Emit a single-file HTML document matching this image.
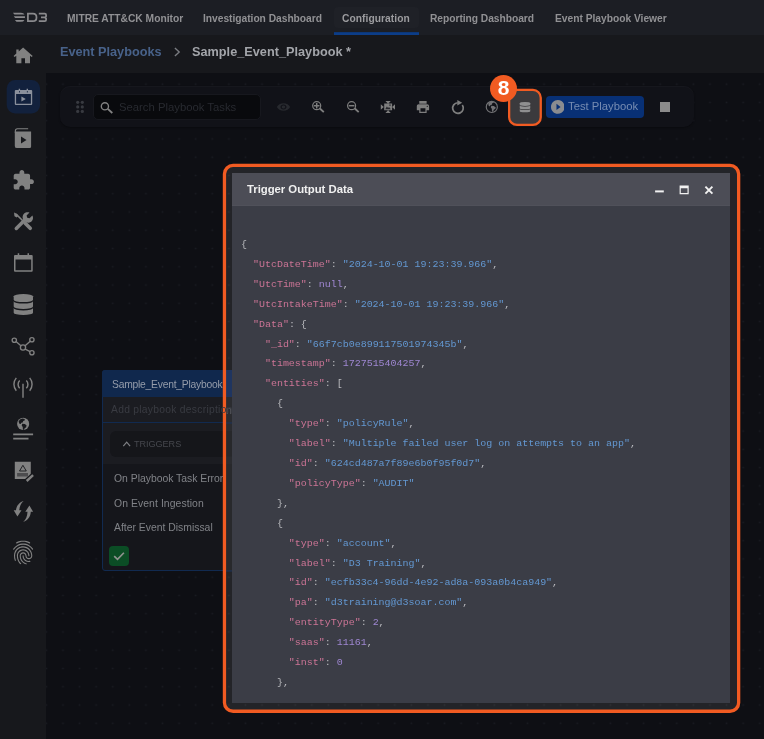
<!DOCTYPE html>
<html lang="en">
<head>
<meta charset="utf-8">
<title>Event Playbooks - Sample_Event_Playbook</title>
<style>
*{box-sizing:border-box;margin:0;padding:0}
html,body{width:764px;height:739px;overflow:hidden;background:#0e0f14;font-family:"Liberation Sans",sans-serif}
#app{position:relative;width:764px;height:739px;overflow:hidden;background:#0e0f14}
.abs{position:absolute;display:block}
.tx{position:absolute;white-space:nowrap;will-change:transform;font-family:"Liberation Sans",sans-serif}
#topbar{left:0;top:0;width:764px;height:35px;background:#1c1e24}
#tabact{left:334px;top:7px;width:84.5px;height:20.5px;border-radius:4px;background:#1f2127}
#tabline{left:334px;top:32px;width:84.5px;height:3px;background:linear-gradient(#0c3778 0,#0c3778 1px,#0c3d88 1px)}
#sidebar{left:0;top:35px;width:46px;height:705px;background:#17181c}
#crumbbar{left:46px;top:35px;width:718px;height:37.8px;background:#17181c}
#canvas{left:46px;top:72.8px;width:718px;height:667px;background-color:#0e0f14}
#toolbar{left:59.5px;top:86.3px;width:634px;height:41px;border-radius:10px;background:#111218;box-shadow:inset 0 1px 0 #16171d,0 1px 2px rgba(0,0,0,.3)}
#search{left:93.3px;top:94px;width:168px;height:25.5px;border-radius:5px;background:#090a0d;border:1px solid #17181e}
#badge{left:490px;top:75px;width:27px;height:27px;border-radius:13.5px;background:#f15b22;color:#fff;font-weight:bold;font-size:21px;line-height:26px;text-align:center;will-change:transform}
#testbtn{left:546px;top:96px;width:97.5px;height:21.5px;border-radius:4px;background:#083075}
#stop{left:660px;top:102px;width:10.3px;height:10.1px;background:#8b8b8b}
#node{left:102px;top:370px;width:170px;height:201px;background:#15161b;border:1px solid #112a50;border-radius:3px}
#nodehead{left:102px;top:370px;width:170px;height:27px;background:#10284d;border-radius:3px 3px 0 0}
#nodedesc{left:103px;top:397px;width:169px;height:26px;background:#1b1c21;border-bottom:1px solid #112a50}
#trigwrap{left:103px;top:423px;width:169px;height:41px;background:#1b1c21}
#trig{left:110px;top:431px;width:162px;height:25.5px;border-radius:6px 0 0 6px;background:#15161a}
#chk{left:109px;top:546.2px;width:20.2px;height:19.7px;border-radius:4px;background:#0b4d25}
#hlfill{left:224px;top:165px;width:516px;height:547px;border-radius:10px;background:#232428;overflow:hidden}
#dlg{left:232px;top:173px;width:498px;height:530px;background:#3b3d46}
#dlghead{left:232px;top:173px;width:498px;height:33px;background:#4c4d56;border-bottom:1px solid #50515a}
#code{left:241.3px;top:234.9px;font-family:"Liberation Mono",monospace;font-size:9.98px;line-height:19.9px;color:#babbbf;white-space:pre;will-change:transform}
.k{color:#cb7495}.s{color:#6398d2}.n{color:#9f87d2}
</style>
</head>
<body>
<div id="app">
 <div id="canvas" class="abs"></div>
 <svg class="abs" style="left:0;top:0" width="764" height="739" viewBox="0 0 764 739">
  <defs><pattern id="dots" x="54.67" y="129.82" width="16.59" height="18.26" patternUnits="userSpaceOnUse"><rect x="7.5" y="8.3" width="1.6" height="1.6" rx=".5" fill="#1a1c23"/></pattern>
  <clipPath id="cv"><rect x="46.5" y="72.7" width="718" height="667"/></clipPath></defs>
  <rect x="46" y="72.8" width="718" height="667" fill="url(#dots)"/>
 </svg>
 <div id="topbar" class="abs"><div id="tabact" class="abs"></div><div id="tabline" class="abs"></div></div>
 <div id="sidebar" class="abs"></div>
 <div id="crumbbar" class="abs"></div>
 <svg class="abs" style="left:170px;top:44px" width="14" height="16" viewBox="170 44 14 16"><path d="M174.9 47.9l4.3 4-4.3 4" fill="none" stroke="#7b7d82" stroke-width="1.35"/></svg>
 <!-- D3 logo -->
 <svg class="abs" style="left:0;top:0" width="60" height="34" viewBox="0 0 60 34">
  <g fill="#8a8a8d"><path d="M12.9 12.8H21Q23.8 12.9 24.5 14.5H14.4Z"/><path d="M13.8 16.2H24.9Q25.1 17.2 24.9 18.1H15.2Z"/><path d="M14.9 19.9H24.4Q23.6 21.7 21 21.8H16.5Z"/></g>
  <g fill="none" stroke="#8a8a8d" stroke-width="1.75"><path d="M27.9 13.7H33Q36.5 13.7 36.5 17.4Q36.5 21.1 33 21.1H27.9Z"/><path d="M38.8 13.7H44.8Q46.1 13.7 46.1 15V16.2L45.1 17.4 46.1 18.6V19.8Q46.1 21.1 44.8 21.1H38.8M41 17.4H45.1"/></g>
 </svg>
 <svg class="abs" style="left:0;top:0" width="46" height="739" viewBox="0 0 46 739"><path fill="#818181" d="M23.1 47.6L32.7 55.9l-1 1.2-1.7-1.4V63.3H25V58.3h-3.6V63.3h-5.1V55.7l-1.7 1.4-1-1.2 2.7-2.4V49.5h2.4v1.9z"/><rect x="6.7" y="80.1" width="33.4" height="33.3" rx="8.5" fill="#12213d"/><path fill="#8a909c" fill-rule="evenodd" d="M14.8 91a1 1 0 0 1 1-1h15.4a1 1 0 0 1 1 1v13a1 1 0 0 1-1 1H15.8a1 1 0 0 1-1-1zM16.1 94.1v9.6h14.8v-9.6z"/><path fill="#8a909c" d="M18.7 88.7h1.4v2.5h-1.4zM26.6 88.7h1.4v2.5h-1.4zM21.4 96.6l4.4 2.4-4.4 2.5z"/><path fill="#12213d" d="M19 90.9h.8v1.5H19zM26.9 90.9h.8v1.5h-.8z"/><path fill="#818181" d="M14.8 131.6h16.3v15a1.5 1.5 0 0 1-1.5 1.5H17a2.2 2.2 0 0 1-2.2-2.2z"/><path fill="none" stroke="#818181" stroke-width="1.1" d="M15.35 133v-2.1a2.1 2.1 0 0 1 2.1-2.1h10.7"/><path fill="#17181c" d="M21 136.6l5.5 3.4-5.5 3.4z"/><svg x="11.78" y="169.18" width="23.09" height="22.17" viewBox="0 0 24 24" preserveAspectRatio="none"><path fill="#818181" d="M20.5 11H19V7c0-1.1-.9-2-2-2h-4V3.5C13 2.12 11.88 1 10.5 1S8 2.12 8 3.5V5H4c-1.1 0-1.99.9-1.99 2v3.8H3.5c1.49 0 2.7 1.21 2.7 2.7s-1.21 2.7-2.7 2.7H2V20c0 1.1.9 2 2 2h3.8v-1.5c0-1.49 1.21-2.7 2.7-2.7 1.49 0 2.7 1.21 2.7 2.7V22H17c1.1 0 2-.9 2-2v-4h1.5c1.38 0 2.5-1.12 2.5-2.5S21.88 11 20.5 11z"/></svg><g fill="none" stroke="#818181" stroke-linecap="round"><path d="M16.6 214.6l5.7 5.7" stroke-width="1.5"/><path d="M25.2 223.2l5 5" stroke-width="3.7"/><path d="M16.3 228.5l8.2-8.2" stroke-width="3.5"/></g><path fill="#818181" d="M14 212.6l2.9 1.2 1.3 2.3-1.5 1.5-2.2-1.3z"/><path fill="#818181" d="M32.4 215.4l-2.9 2.9-2.3-.6-.6-2.3 2.9-2.9c-1.9-.7-4-.3-5.4 1.1-1.5 1.5-1.9 3.7-1.1 5.6l3.1 3.1c1.9.8 4.1.4 5.6-1.1 1.4-1.5 1.8-3.8.7-5.8z"/><path fill="#818181" fill-rule="evenodd" d="M14 255.9a1 1 0 0 1 1-1h16.7a1 1 0 0 1 1 1v14.8a1 1 0 0 1-1 1H15a1 1 0 0 1-1-1zM15.5 259.5v10.7h15.7v-10.7z"/><path fill="#818181" d="M17.7 253.3h1.5v2.5h-1.5zM27.5 253.3H29v2.5h-1.5z"/><svg x="10.48" y="291.9" width="25.73" height="25.2" viewBox="0 0 24 24" preserveAspectRatio="none"><path fill="#818181" d="M3 4.2A9 2.2 0 0 1 21 4.2V7.5A9 2.2 0 0 1 3 7.5Z"/><path fill="#818181" d="M3 8.9A9 2.2 0 0 0 21 8.9V14A9 2.2 0 0 1 3 14Z"/><path fill="#818181" d="M3 15.4A9 2.2 0 0 0 21 15.4V19.8A9 2.2 0 0 1 3 19.8Z"/></svg><g fill="none" stroke="#818181" stroke-width="1.35"><circle cx="14.3" cy="340.2" r="2.15"/><circle cx="23" cy="347.5" r="2.6"/><circle cx="31.9" cy="339.7" r="2.15"/><circle cx="31.9" cy="352.7" r="2.15"/><path d="M16 341.6l4.9 4.2M25.1 345.7l5.1-4.5M25.2 349.2l4.9 2.4"/></g><g fill="none" stroke="#818181" stroke-width="1.45"><path d="M23 383.8V397.8"/><path d="M19.7 380.6a5.4 5.4 0 0 0 0 7.7M26.3 380.6a5.4 5.4 0 0 1 0 7.7"/><path d="M16.3 377.9a10 10 0 0 0 0 12.9M29.7 377.9a10 10 0 0 1 0 12.9"/></g><circle cx="23.15" cy="423.9" r="6.05" fill="#818181"/><path fill="#17181c" d="M18.6 421.6l1.3-2.1 2.6-1.1 2.1.5.3 1.3-1.7.7-.5 1.5-1.4.4-.6 1.2-1.3-.3zM22.3 423.7l2.6.3 1.7 1.5-.5 1.8-1.6 1.1-.7 1.5-.9-.5-.2-2.5-1-1.5z"/><path fill="#818181" d="M13.2 433.5h19.9v1.8H13.2zM13.2 437.7h15.3v1.8H13.2z"/><path fill="#818181" d="M14.8 461.8h16v17.1h-16z"/><path fill="none" stroke="#17181c" stroke-width=".9" d="M22.9 465.3l3.4 5.7h-6.8z"/><path fill="#17181c" opacity=".5" d="M17.1 473h10.9v3.5H17.1z"/><path stroke="#17181c" stroke-width="5.2" d="M25.5 482.1l8.8-8"/><path stroke="#818181" stroke-width="2.4" d="M26.7 481l6.4-5.8"/><path fill="#818181" d="M23.6 500.9c-4.3 1.3-7.2 4.8-7.6 9.3h-2.3l3.7 6.3 4.1-6.3h-2.2c.2-3.8 1.6-7 4.3-9.3z"/><path fill="#818181" d="M23.2 521.9c4.3-1.3 7.2-4.8 7.6-10.1h2.3l-3.7-6.3-4.1 6.3h2.2c-.2 4.6-1.6 7.8-4.3 10.1z"/><svg x="12.9" y="540.5" width="20.5" height="24.1" viewBox="2.8 2 18.4 20" preserveAspectRatio="none"><path fill="#818181" d="M17.81 4.47c-.08 0-.16-.02-.23-.06C15.66 3.42 14 3 12.01 3c-1.98 0-3.86.47-5.57 1.41-.24.13-.54.04-.68-.2-.13-.24-.04-.55.2-.68C7.82 2.52 9.86 2 12.01 2c2.13 0 3.99.47 6.03 1.52.25.13.34.43.21.67-.09.18-.26.28-.44.28zM3.5 9.72c-.1 0-.2-.03-.29-.09-.23-.16-.28-.47-.12-.7.99-1.4 2.25-2.5 3.75-3.27C9.98 4.04 14 4.03 17.15 5.65c1.5.77 2.76 1.86 3.75 3.25.16.22.11.54-.12.7-.23.16-.54.11-.7-.12-.9-1.26-2.04-2.25-3.39-2.94-2.87-1.47-6.54-1.47-9.4.01-1.36.7-2.5 1.7-3.4 2.96-.08.14-.23.21-.39.21zm6.25 12.07c-.13 0-.26-.05-.35-.15-.87-.87-1.34-1.43-2.01-2.64-.69-1.23-1.05-2.73-1.05-4.34 0-2.97 2.54-5.39 5.66-5.39s5.66 2.42 5.66 5.39c0 .28-.22.5-.5.5s-.5-.22-.5-.5c0-2.42-2.09-4.39-4.66-4.39-2.57 0-4.66 1.97-4.66 4.39 0 1.44.32 2.77.93 3.85.64 1.15 1.08 1.64 1.85 2.42.19.2.19.51 0 .71-.11.1-.24.15-.37.15zm7.17-1.85c-1.19 0-2.24-.3-3.1-.89-1.49-1.01-2.38-2.65-2.38-4.39 0-.28.22-.5.5-.5s.5.22.5.5c0 1.41.72 2.74 1.94 3.56.71.48 1.54.71 2.54.71.24 0 .64-.03 1.04-.1.27-.05.53.13.58.41.05.27-.13.53-.41.58-.57.11-1.07.12-1.21.12zM14.91 22c-.04 0-.09-.01-.13-.02-1.59-.44-2.63-1.03-3.72-2.1-1.4-1.39-2.17-3.24-2.17-5.22 0-1.62 1.38-2.94 3.08-2.94 1.7 0 3.08 1.32 3.08 2.94 0 1.07.93 1.94 2.08 1.94s2.08-.87 2.08-1.94c0-3.77-3.25-6.83-7.25-6.83-2.84 0-5.44 1.58-6.61 4.03-.39.81-.59 1.76-.59 2.8 0 .78.07 2.01.67 3.61.1.26-.03.55-.29.64-.26.1-.55-.04-.64-.29-.49-1.31-.73-2.61-.73-3.96 0-1.2.23-2.29.68-3.24 1.33-2.79 4.28-4.6 7.51-4.6 4.55 0 8.25 3.51 8.25 7.83 0 1.62-1.38 2.94-3.08 2.94s-3.08-1.32-3.08-2.94c0-1.07-.93-1.94-2.08-1.94s-2.08.87-2.08 1.94c0 1.71.66 3.31 1.87 4.51.95.94 1.86 1.46 3.27 1.85.27.07.42.35.35.61-.05.23-.26.38-.47.38z"/></svg></svg>
 <div id="toolbar" class="abs"></div>
 <div id="search" class="abs"></div>
 <svg class="abs" style="left:0;top:0" width="764" height="130" viewBox="0 0 764 130"><circle cx="77.7" cy="102.3" r="1.6" fill="#383a40"/><circle cx="77.7" cy="106.9" r="1.6" fill="#383a40"/><circle cx="77.7" cy="111.4" r="1.6" fill="#383a40"/><circle cx="82.3" cy="102.3" r="1.6" fill="#383a40"/><circle cx="82.3" cy="106.9" r="1.6" fill="#383a40"/><circle cx="82.3" cy="111.4" r="1.6" fill="#383a40"/><circle cx="104.9" cy="106.3" r="3.6" fill="none" stroke="#828282" stroke-width="1.35"/><path d="M107.79 108.92L112.3 113" stroke="#828282" stroke-width="1.9" fill="none"/><svg x="276.3" y="100.95" width="14.4" height="12" viewBox="0 0 24 24" preserveAspectRatio="none"><path fill="#27292e" d="M12 4.5C7 4.5 2.73 7.61 1 12c1.73 4.39 6 7.5 11 7.5s9.27-3.11 11-7.5c-1.73-4.39-6-7.5-11-7.5zM12 17c-2.76 0-5-2.24-5-5s2.24-5 5-5 5 2.24 5 5-2.24 5-5 5zm0-8c-1.66 0-3 1.34-3 3s1.34 3 3 3 3-1.34 3-3-1.34-3-3-3z"/></svg><circle cx="316.7" cy="105.7" r="4" fill="none" stroke="#7e7e7e" stroke-width="1.25"/><path d="M319.89 108.58L323.8 112.1" stroke="#7e7e7e" stroke-width="1.9" fill="none"/><path d="M313.9 105.7h5.6M316.7 102.9v5.6" stroke="#7e7e7e" stroke-width="1.5"/><circle cx="351.6" cy="105.7" r="4" fill="none" stroke="#7e7e7e" stroke-width="1.25"/><path d="M354.79 108.58L358.7 112.1" stroke="#7e7e7e" stroke-width="1.9" fill="none"/><path d="M348.8 105.7h5.6" stroke="#7e7e7e" stroke-width="1.5"/><path fill="#7e7e7e" d="M385.4 100.9h5.4l-2.7 2.8zM385.4 113h5.4l-2.7-2.8zM380.8 104.3v5.4l3-2.7zM395 104.3v5.4l-2.9-2.7zM384.2 103.5h7.9v6.7h-7.9z"/><path fill="#111218" d="M385.2 109.2l1.7-2.6 1.2 1.4.9-1 1.9 2.2zM389.3 104.5h1.4v1.3h-1.4z" opacity=".8"/><svg x="415.57" y="99" width="14.76" height="16" viewBox="0 0 24 24" preserveAspectRatio="none"><path fill="#7e7e7e" d="M19 8H5c-1.66 0-3 1.34-3 3v6h4v4h12v-4h4v-6c0-1.66-1.34-3-3-3zm-3 11H8v-5h8v5zm3-7c-.55 0-1-.45-1-1s.45-1 1-1 1 .45 1 1-.45 1-1 1zm-1-9H6v4h12V3z"/></svg><path d="M462.3 105A5.3 5.3 0 1 1 457.7 102.75" fill="none" stroke="#7e7e7e" stroke-width="1.7"/><path fill="#7e7e7e" d="M457.3 99.9l4.9 2.9-4.9 2.7z"/><circle cx="491.8" cy="106.95" r="5.55" fill="none" stroke="#727275" stroke-width="1.15"/><path fill="#727275" d="M488.3 103.3l1.6-1.5 3.6-.4.3 1.3-1.6.6-.4 1.5-1.5.4-.6 1.3-1.2-1.1zM491.3 105.7l2.5.2 2 1.5-.5 1.3-1.5 1-.8 2.1-1-.4-.2-2.6-1-1.4z"/></svg>
 <svg class="abs" style="left:500px;top:80px" width="50" height="55" viewBox="500 80 50 55"><rect x="509.15" y="89.95" width="31.6" height="35" rx="7.8" fill="#3b3a3d" stroke="#f15b22" stroke-width="2.3"/></svg>
 <svg class="abs" style="left:518px;top:100.87px" width="14" height="12.36" viewBox="0 0 24 24" preserveAspectRatio="none"><path fill="#8f8f90" d="M3 4.2A9 2.2 0 0 1 21 4.2V7.5A9 2.2 0 0 1 3 7.5Z"/><path fill="#8f8f90" d="M3 8.9A9 2.2 0 0 0 21 8.9V14A9 2.2 0 0 1 3 14Z"/><path fill="#8f8f90" d="M3 15.4A9 2.2 0 0 0 21 15.4V19.8A9 2.2 0 0 1 3 19.8Z"/></svg>
 <div id="testbtn" class="abs"></div>
 <svg class="abs" style="left:550.5px;top:100.2px" width="13.7" height="13.9" viewBox="2 2 20 20" ><path d="M12 2C6.48 2 2 6.48 2 12s4.48 10 10 10 10-4.48 10-10S17.52 2 12 2zm-2 14.5v-9l6 4.5-6 4.5z" fill="#8a8c90"/></svg>
 <div id="stop" class="abs"></div>
 <div id="badge" class="abs">8</div>

 <div id="node" class="abs"></div>
 <div id="nodehead" class="abs"></div>
 <div id="nodedesc" class="abs"></div>
 <div id="trigwrap" class="abs"></div>
 <div id="trig" class="abs"></div>
 <svg class="abs" style="left:120px;top:438px" width="14" height="12" viewBox="120 438 14 12"><path d="M123.3 446.1l3.4-4 3.4 4" fill="none" stroke="#7f8185" stroke-width="1.15"/></svg>
 <div id="chk" class="abs"></div>
 <svg class="abs" style="left:109px;top:546px" width="21" height="20" viewBox="109 546 21 20"><path d="M114.2 556.2l3.3 3.2 6.4-6.7" fill="none" stroke="#8f928f" stroke-width="1.65"/></svg>

 <div id="hlfill" class="abs"></div>
 <svg class="abs" style="left:224px;top:165px" width="516" height="547" viewBox="224 165 516 547">
  <defs><pattern id="dots2" x="54.67" y="129.82" width="16.59" height="18.26" patternUnits="userSpaceOnUse"><rect x="7.5" y="8.3" width="1.6" height="1.6" rx=".5" fill="#303136"/></pattern></defs>
  <rect x="224" y="165" width="516" height="547" rx="9" fill="url(#dots2)"/>
  <rect x="224" y="370" width="9" height="27" fill="#1f3560"/>
  <rect x="224" y="397" width="9" height="67" fill="#2b2c30"/>
  <rect x="224" y="431" width="9" height="25.5" fill="#27282b"/>
  <rect x="224" y="464" width="9" height="107" fill="#28292c"/>
  <rect x="224" y="422.4" width="9" height="1.1" fill="#1d3258"/>
  <rect x="224" y="570.4" width="9" height="1.1" fill="#1d3258"/>
 </svg>
 <div class="tx" style="left:226px;top:402.5px;width:6px;overflow:hidden;font-size:10.6px;line-height:14px;color:#5a5c62;direction:rtl">n</div>
 <div id="dlg" class="abs"></div>
 <div id="dlghead" class="abs"></div>
 <svg class="abs" style="left:650px;top:180px" width="70" height="20" viewBox="650 180 70 20">
  <rect x="655.1" y="190.4" width="8.7" height="2" fill="#f1f1f1"/>
  <path d="M679.6 185.6h9.1v8.7h-9.1zM680.8 188.2v4.9h6.7v-4.9z" fill="#f1f1f1" fill-rule="evenodd"/>
  <path d="M705.4 186.7l7 7M712.4 186.7l-7 7" stroke="#f1f1f1" stroke-width="1.9" fill="none"/>
 </svg>
 <svg class="abs" style="left:215px;top:155px" width="535" height="565" viewBox="215 155 535 565"><rect x="224.45" y="165.45" width="514.2" height="545.8" rx="8.6" fill="none" stroke="#f15b22" stroke-width="3.3"/></svg>
<div class="tx" style="left:66.5px;top:11.55px;font-size:10.25px;line-height:13px;font-weight:bold;color:#919194;letter-spacing:0.002px;">MITRE ATT&amp;CK Monitor</div>
<div class="tx" style="left:203.1px;top:11.55px;font-size:10.25px;line-height:13px;font-weight:bold;color:#919194;letter-spacing:-0.028px;">Investigation Dashboard</div>
<div class="tx" style="left:342.4px;top:11.55px;font-size:10.25px;line-height:13px;font-weight:bold;color:#9c9c9f;letter-spacing:0.051px;">Configuration</div>
<div class="tx" style="left:430.3px;top:11.55px;font-size:10.25px;line-height:13px;font-weight:bold;color:#919194;letter-spacing:-0.044px;">Reporting Dashboard</div>
<div class="tx" style="left:555px;top:11.55px;font-size:10.25px;line-height:13px;font-weight:bold;color:#919194;letter-spacing:-0.017px;">Event Playbook Viewer</div>
<div class="tx" style="left:60px;top:44.3px;font-size:12.7px;line-height:17px;font-weight:bold;color:#48628a;letter-spacing:-0.003px;">Event Playbooks</div>
<div class="tx" style="left:191.5px;top:44.3px;font-size:12.7px;line-height:17px;font-weight:bold;color:#a3a5aa;letter-spacing:0.015px;">Sample_Event_Playbook *</div>
<div class="tx" style="left:118.8px;top:99.68px;font-size:11.3px;line-height:15px;font-weight:normal;color:#282a30;letter-spacing:-0.001px;">Search Playbook Tasks</div>
<div class="tx" style="left:568px;top:98.8px;font-size:11.25px;line-height:15px;font-weight:normal;color:#768cb2;letter-spacing:0.013px;">Test Playbook</div>
<div class="tx" style="left:112.3px;top:377.93px;font-size:10.3px;line-height:13px;font-weight:normal;color:#959caa;letter-spacing:-0.223px;">Sample_Event_Playbook</div>
<div class="tx" style="left:111px;top:403.13px;font-size:10.3px;line-height:13px;font-weight:normal;color:#393b42;letter-spacing:0.276px;">Add playbook description</div>
<div class="tx" style="left:134px;top:438.35px;font-size:9.1px;line-height:12px;font-weight:normal;color:#46484e;letter-spacing:-0.043px;">TRIGGERS</div>
<div class="tx" style="left:113.6px;top:471.7px;font-size:10.4px;line-height:14px;font-weight:normal;color:#818388;letter-spacing:-0.012px;">On Playbook Task Error</div>
<div class="tx" style="left:113.6px;top:496.5px;font-size:10.4px;line-height:14px;font-weight:normal;color:#818388;letter-spacing:0.077px;">On Event Ingestion</div>
<div class="tx" style="left:113.6px;top:521.2px;font-size:10.4px;line-height:14px;font-weight:normal;color:#818388;letter-spacing:-0.002px;">After Event Dismissal</div>
<div class="tx" style="left:247.1px;top:181.67px;font-size:11.35px;line-height:15px;font-weight:bold;color:#f0f0f0;letter-spacing:-0.029px;">Trigger Output Data</div>
<pre id="code" class="abs">{
  <span class="k">"UtcDateTime"</span>: <span class="s">"2024-10-01 19:23:39.966"</span>,
  <span class="k">"UtcTime"</span>: <span class="n">null</span>,
  <span class="k">"UtcIntakeTime"</span>: <span class="s">"2024-10-01 19:23:39.966"</span>,
  <span class="k">"Data"</span>: {
    <span class="k">"_id"</span>: <span class="s">"66f7cb0e899117501974345b"</span>,
    <span class="k">"timestamp"</span>: <span class="n">1727515404257</span>,
    <span class="k">"entities"</span>: [
      {
        <span class="k">"type"</span>: <span class="s">"policyRule"</span>,
        <span class="k">"label"</span>: <span class="s">"Multiple failed user log on attempts to an app"</span>,
        <span class="k">"id"</span>: <span class="s">"624cd487a7f89e6b0f95f0d7"</span>,
        <span class="k">"policyType"</span>: <span class="s">"AUDIT"</span>
      },
      {
        <span class="k">"type"</span>: <span class="s">"account"</span>,
        <span class="k">"label"</span>: <span class="s">"D3 Training"</span>,
        <span class="k">"id"</span>: <span class="s">"ecfb33c4-96dd-4e92-ad8a-093a0b4ca949"</span>,
        <span class="k">"pa"</span>: <span class="s">"d3training@d3soar.com"</span>,
        <span class="k">"entityType"</span>: <span class="n">2</span>,
        <span class="k">"saas"</span>: <span class="n">11161</span>,
        <span class="k">"inst"</span>: <span class="n">0</span>
      },</pre>
</div>
</body>
</html>
